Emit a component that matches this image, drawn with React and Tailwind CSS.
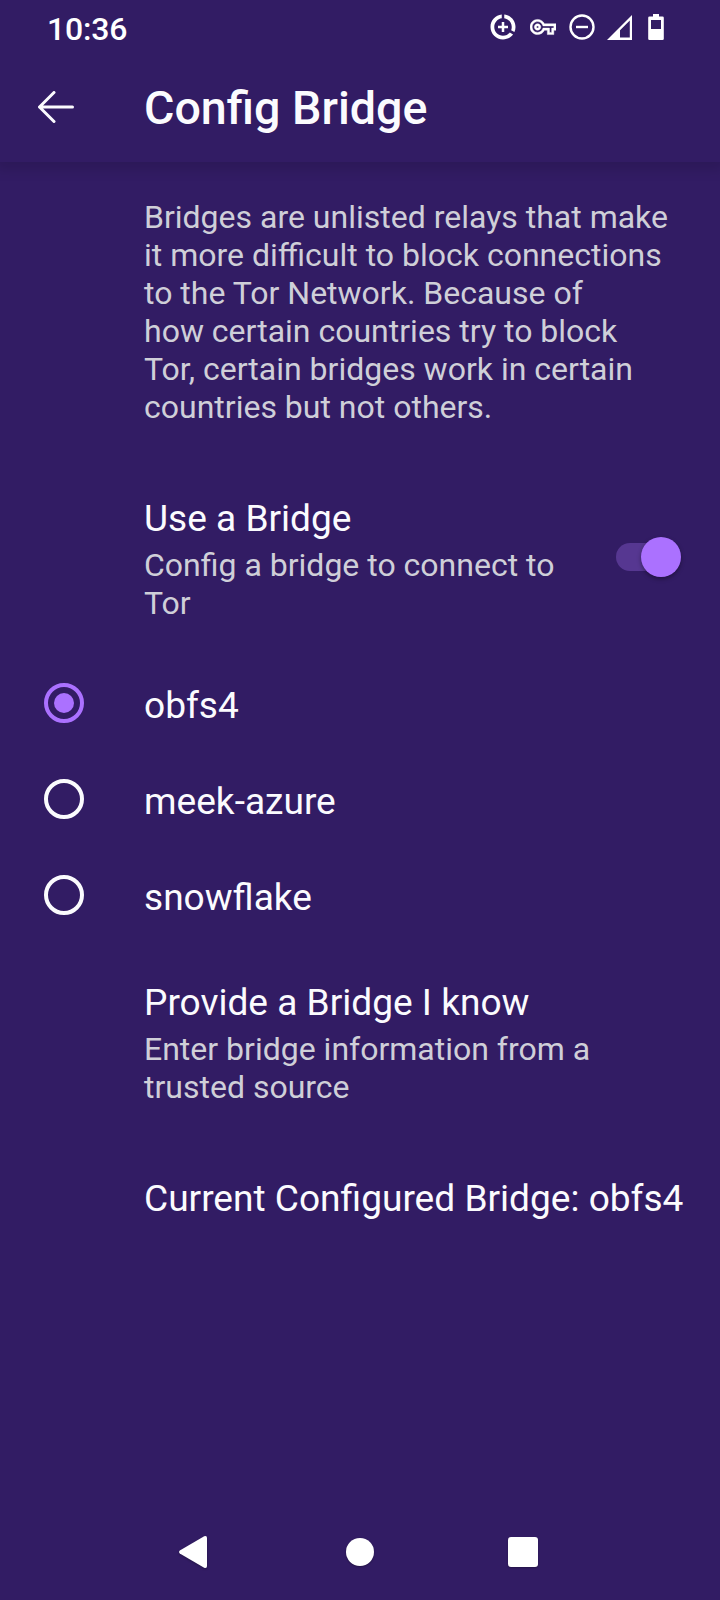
import { useState } from "react";

const BRIDGES = ["obfs4", "meek-azure", "snowflake"];

// Icons on the right side of the status bar
function StatusIcons() {
    return (
        <div className="flex items-center text-white">
            <svg className="w-[30px] h-[30px]" viewBox="0 0 24 24" fill="currentColor">
                <path d="M11 8v3H8v2h3v3h2v-3h3v-2h-3V8h-2zm2-5.95v3.03c3.39.49 6 3.39 6 6.92 0 .9-.18 1.75-.48 2.54l2.6 1.53c.56-1.24.88-2.62.88-4.07 0-5.18-3.95-9.45-9-9.95zM12 19c-3.87 0-7-3.13-7-7 0-3.53 2.61-6.43 6-6.92V2.05c-5.06.5-9 4.76-9 9.95 0 5.52 4.47 10 9.99 10 3.31 0 6.24-1.61 8.06-4.09l-2.6-1.53C16.17 17.98 14.21 19 12 19z" />
            </svg>
            <svg className="w-[26px] h-[26px] ml-3" viewBox="0 0 24 24" fill="currentColor" stroke="currentColor" strokeWidth="0.4">
                <path d="M22 19h-6v-4h-2.68c-1.14 2.42-3.6 4-6.32 4-3.86 0-7-3.14-7-7s3.14-7 7-7c2.72 0 5.17 1.58 6.32 4H24v6h-2v4zm-4-2h2v-4h2v-2H11.94l-.23-.67C11.01 8.34 9.11 7 7 7c-2.76 0-5 2.24-5 5s2.24 5 5 5c2.11 0 4.01-1.34 4.71-3.33l.23-.67H18v4zM7 15c-1.65 0-3-1.35-3-3s1.35-3 3-3 3 1.35 3 3-1.35 3-3 3zm0-4c-.55 0-1 .45-1 1s.45 1 1 1 1-.45 1-1-.45-1-1-1z" />
            </svg>
            <svg className="w-[26px] h-[26px] ml-[13px]" viewBox="0 0 26 26" fill="none" stroke="currentColor">
                <circle cx="13" cy="13" r="11.5" strokeWidth="2.4" />
                <path d="M7 13h12" strokeWidth="2.4" />
            </svg>
            <svg className="w-[26px] h-[26px] ml-3" viewBox="0 0 26 26" fill="currentColor">
                <path fillRule="evenodd" d="M0 26L25 1v25H0zM13 23.5h9.8V6.4L13 16.2v7.3z" />
            </svg>
            <svg className="w-4 h-[26px] ml-[15px]" viewBox="0 0 16 26" fill="currentColor">
                <path fillRule="evenodd" d="M5 0h6v2.5h3.5a1.3 1.3 0 0 1 1.3 1.3v20.9a1.3 1.3 0 0 1-1.3 1.3h-13a1.3 1.3 0 0 1-1.3-1.3V3.8a1.3 1.3 0 0 1 1.3-1.3H5V0zM3 6v9h10V6H3z" />
            </svg>
        </div>
    );
}

function Preference({ title, summary, children }) {
    return (
        <div className="flex items-center pl-36">
            <div className="flex-1">
                <h2 className="text-[37.1px] leading-[44px]">{title}</h2>
                {summary && (
                    <p className="mt-[5px] text-[32px] leading-[38px] text-[#cfcfd8]">
                        {summary}
                    </p>
                )}
            </div>
            {children}
        </div>
    );
}

function Switch({ checked, onChange }) {
    return (
        <button
            type="button"
            role="switch"
            aria-checked={checked}
            aria-label="Use a Bridge"
            onClick={() => onChange(!checked)}
            className="relative w-[60px] h-7 mr-11 -mt-1.5 rounded-full bg-[#563791]"
        >
            <span className="absolute left-[25px] -top-1.5 w-10 h-10 rounded-full bg-[#ab71ff] shadow-[0_2px_4px_rgba(0,0,0,0.35)]" />
        </button>
    );
}

function RadioRow({ label, selected, onSelect }) {
    return (
        <button
            type="button"
            role="radio"
            aria-checked={selected}
            onClick={onSelect}
            className="flex items-center w-full h-24 pl-11 text-left"
        >
            <svg
                className={selected ? "w-10 h-10 text-[#ab71ff]" : "w-10 h-10 text-[#fbfbfe]"}
                viewBox="0 0 40 40"
            >
                <circle cx="20" cy="20" r="18" fill="none" stroke="currentColor" strokeWidth="4" />
                {selected && <circle cx="20" cy="20" r="10" fill="currentColor" />}
            </svg>
            <span className="ml-[60px] pt-[5px] text-[37.1px] leading-[44px]">{label}</span>
        </button>
    );
}

export default function App() {
    const [enabled, setEnabled] = useState(true);
    const [bridge, setBridge] = useState("obfs4");

    return (
        <div className="flex flex-col w-[720px] h-[1600px] overflow-hidden bg-[#321c64] text-[#fbfbfe] font-['Roboto',sans-serif]">
            <header className="shrink-0 h-[162px] shadow-[0_4px_12px_4px_rgba(0,0,0,0.12)] bg-[#321c64]">
                <div className="flex items-center justify-between h-[54px] pl-[47px] pr-14">
                    <span className="pt-[3px] text-[32px] leading-[38px] tracking-[-0.2px] font-medium text-white">10:36</span>
                    <StatusIcons />
                </div>
                <div className="flex items-center h-[104px] pl-[38px]">
                    <svg className="w-9 h-8 mt-px" viewBox="0 0 36 32" fill="none" stroke="currentColor" strokeWidth="3" strokeLinecap="round" strokeLinejoin="round">
                        <path d="M16 1.5L1.5 16L16 30.5M1.5 16h33" />
                    </svg>
                    <h1 className="ml-[70px] pt-1 text-[46.6px] leading-[54px] font-medium">Config Bridge</h1>
                </div>
            </header>

            <main className="flex-1">
                <p className="mt-9 pl-36 pr-12 text-[32px] leading-[38px] text-[#cfcfd8]">
                    Bridges are unlisted relays that make
                    <br />
                    it more difficult to block connections
                    <br />
                    to the Tor Network. Because of
                    <br />
                    how certain countries try to block
                    <br />
                    Tor, certain bridges work in certain
                    <br />
                    countries but not others.
                </p>

                <div className="mt-[71px]">
                    <Preference
                        title="Use a Bridge"
                        summary={<>Config a bridge to connect to<br />Tor</>}
                    >
                        <Switch checked={enabled} onChange={setEnabled} />
                    </Preference>
                </div>

                <div role="radiogroup" className="mt-[33px]">
                    {BRIDGES.map((name) => (
                        <RadioRow
                            key={name}
                            label={name}
                            selected={bridge === name}
                            onSelect={() => setBridge(name)}
                        />
                    ))}
                </div>

                <div className="mt-[38px]">
                    <Preference
                        title="Provide a Bridge I know"
                        summary={<>Enter bridge information from a<br />trusted source</>}
                    />
                </div>

                <div className="mt-[71px] whitespace-nowrap">
                    <Preference title={`Current Configured Bridge: ${bridge}`} />
                </div>
            </main>

            {/* System navigation bar */}
            <nav className="flex items-center shrink-0 h-24 pl-[179px] text-white">
                <svg className="w-7 h-8 drop-shadow-[0_1px_1px_rgba(0,0,0,0.3)]" viewBox="0 0 28 32" fill="currentColor">
                    <path d="M.8 14.6L25.2.3Q28-.6 28 2v28q0 2.6-2.8 1.7L.8 17.4Q-.7 16 .8 14.6z" />
                </svg>
                <span className="w-7 h-7 ml-[139px] rounded-full bg-white shadow-[0_1px_2px_rgba(0,0,0,0.3)]" />
                <span className="w-[30px] h-[30px] ml-[134px] rounded-[3px] bg-white shadow-[0_1px_2px_rgba(0,0,0,0.3)]" />
            </nav>
        </div>
    );
}
